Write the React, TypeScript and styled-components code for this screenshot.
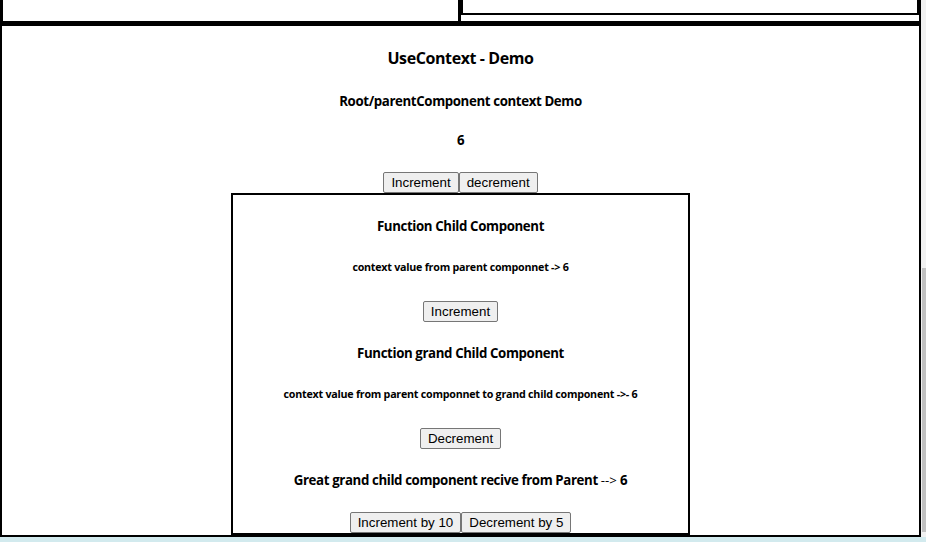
import React, { useState } from "react";
import styled, { createGlobalStyle } from "styled-components";

const GlobalStyle = createGlobalStyle`
  html, body { margin: 0; padding: 0; }
  body {
    background: #d2eaee;
    font-family: "Open Sans", "Noto Sans", sans-serif;
    color: #000;
  }
`;

const Page = styled.div`
  display: flex;
  height: 537px;
  background: #fff;
  overflow: hidden;
`;

const Content = styled.div`
  width: 921px;
  display: flex;
  flex-direction: column;
`;

const Scrollbar = styled.div`
  flex: 1;
  background: #f1f1f1;
  display: flex;
  flex-direction: column;
`;

const Thumb = styled.div`
  margin-top: 268px;
  margin-left: 1px;
  height: 264px;
  background: #c1c1c1;
`;

const TopRow = styled.div`
  display: flex;
  height: 24px;
`;

const LeftCell = styled.div`
  width: 461px;
  box-sizing: border-box;
  border-left: 3px solid #000;
  border-right: 3px solid #000;
  border-bottom: 3px solid #000;
`;

const RightCell = styled.div`
  flex: 1;
  box-sizing: border-box;
  border-right: 2px solid #000;
  border-bottom: 3px solid #000;
`;

const InnerBox = styled.div`
  height: 15px;
  box-sizing: border-box;
  border-left: 2px solid #000;
  border-right: 2px solid #000;
  border-bottom: 2px solid #000;
`;

const MainBox = styled.section`
  border: 2px solid #000;
  text-align: center;
  flex: 1;
`;

const ChildBox = styled.div`
  width: 459px;
  box-sizing: border-box;
  margin: 0 auto;
  border: 2px solid #000;
  text-align: center;
`;

const Title = styled.h4`
  margin: 22px 0 0;
  font-size: 16px;
  line-height: 21px;
  font-weight: 700;
  letter-spacing: -0.41px;
`;

const Heading = styled.h5<{ $mt: number }>`
  margin: ${(p) => p.$mt}px 0 0;
  font-size: 13.28px;
  line-height: 18px;
  font-weight: 700;
  letter-spacing: -0.38px;
`;

const Note = styled.h6`
  margin: 25px 0 0;
  font-size: 10.72px;
  line-height: 14px;
  font-weight: 700;
  letter-spacing: -0.25px;
`;

const ButtonRow = styled.div<{ $mt: number }>`
  margin-top: ${(p) => p.$mt}px;
  display: flex;
  justify-content: center;
  height: 21px;
`;

const Button = styled.button`
  height: 21px;
  box-sizing: border-box;
  font-family: "Liberation Sans", Arial, sans-serif;
  font-size: 13.33px;
  line-height: 15px;
  padding: 1px 7px;
  color: #000;
  background: #efefef;
  border: 1px solid #767676;
  border-radius: 2px;
  margin: 0;
  cursor: default;
`;

const Arrow = styled.span`
  font-weight: 400;
  letter-spacing: 0;
`;

export default function App() {
  const [count, setCount] = useState(6);
  return (
    <>
      <GlobalStyle />
      <Page>
        <Content>
          <TopRow>
            <LeftCell />
            <RightCell>
              <InnerBox />
            </RightCell>
          </TopRow>
          <MainBox>
            <Title>UseContext - Demo</Title>
            <Heading $mt={23}>Root/parentComponent context Demo</Heading>
            <Heading $mt={21}>{count}</Heading>
            <ButtonRow $mt={23}>
              <Button onClick={() => setCount(count + 1)}>Increment</Button>
              <Button onClick={() => setCount(count - 1)}>decrement</Button>
            </ButtonRow>
            <ChildBox>
              <Heading $mt={22}>Function Child Component</Heading>
              <Note>context value from parent componnet -&gt; {count}</Note>
              <ButtonRow $mt={27}>
                <Button onClick={() => setCount(count + 1)}>Increment</Button>
              </ButtonRow>
              <Heading $mt={22}>Function grand Child Component</Heading>
              <Note>
                context value from parent componnet to grand child component -&gt;- {count}
              </Note>
              <ButtonRow $mt={27}>
                <Button onClick={() => setCount(count - 1)}>Decrement</Button>
              </ButtonRow>
              <Heading $mt={22}>
                Great grand child component recive from Parent <Arrow>--&gt;</Arrow> {count}
              </Heading>
              <ButtonRow $mt={23}>
                <Button onClick={() => setCount(count + 10)}>Increment by 10</Button>
                <Button onClick={() => setCount(count - 5)}>Decrement by 5</Button>
              </ButtonRow>
            </ChildBox>
          </MainBox>
        </Content>
        <Scrollbar>
          <Thumb />
        </Scrollbar>
      </Page>
    </>
  );
}
